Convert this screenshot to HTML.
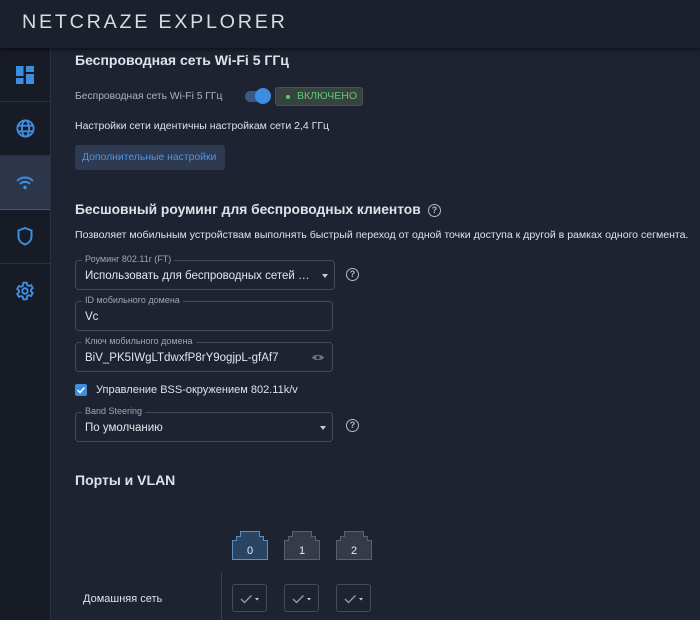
<!DOCTYPE html><html><head><meta charset="utf-8"><style>
*{margin:0;padding:0;box-sizing:border-box}
body{width:700px;height:620px;overflow:hidden;background:#1e2332;font-family:"Liberation Sans","Noto Sans CJK SC",sans-serif;color:#e6e8ec;position:relative}
.hdr{position:absolute;left:0;top:0;width:700px;height:48px;background:#1b202c;box-shadow:0 2px 4px rgba(0,0,0,.5);z-index:2}
.logo{position:absolute;left:22px;top:12px;font-size:19px;letter-spacing:2.6px;color:#d8dbe0;transform:scaleX(1.04);transform-origin:left}
.side{position:absolute;left:0;top:48px;width:51px;height:572px;background:#171b25;border-right:1px solid #2a3040}
.si{height:54px;display:flex;align-items:center;justify-content:center;border-bottom:1px solid #22324a}
.si.act{background:#2c354a;border-bottom:1px solid #2f5e92}
.t{position:absolute;white-space:nowrap}
.h1{font-size:14px;font-weight:bold;color:#dfe2e7}
.fld{position:absolute;border:1px solid #434a5a;border-radius:4px;height:30px}
.lab{position:absolute;top:-7px;left:6px;background:#1e2332;padding:0 3px;font-size:9px;color:#a0a6b2}
.val{position:absolute;left:9px;top:9px;font-size:11.5px;color:#e3e5e9;white-space:nowrap;overflow:hidden;text-overflow:ellipsis;max-width:228px}
.q{position:absolute;width:13px;height:13px;border:1.3px solid #b5bac4;border-radius:50%;font-size:9px;color:#b5bac4;text-align:center;line-height:11px;font-weight:bold}
.arr{position:absolute;right:6px;top:13px;width:0;height:0;border-left:3px solid transparent;border-right:3px solid transparent;border-top:4px solid #c8ccd4}
.port{position:absolute;top:530px;width:36px;height:30px}
.cb{position:absolute;top:584px;width:35px;height:28px;border:1px solid #444b5b;border-radius:3px}
</style></head><body>
<div class="hdr"><div class="logo">NETCRAZE EXPLORER</div></div>
<div class="side">
<div class="si"><svg width="18" height="18" viewBox="0 0 18 18" fill="#3d8de0"><rect x="0" y="0" width="7.5" height="10"/><rect x="10" y="0" width="8" height="6"/><rect x="0" y="12" width="7.5" height="6"/><rect x="10" y="8" width="8" height="10"/></svg></div>
<div class="si"><svg width="19" height="19" viewBox="0 0 20 20" fill="none" stroke="#3d8de0" stroke-width="2"><circle cx="10" cy="10" r="8.5"/><ellipse cx="10" cy="10" rx="3.8" ry="8.5"/><path d="M2 7h16M2 13h16"/></svg></div>
<div class="si act"><svg width="18" height="14" viewBox="0 0 18 14" fill="none" stroke="#3d8de0" stroke-width="2"><path d="M1 5a11 11 0 0 1 16 0M4 8a7 7 0 0 1 10 0"/><circle cx="9" cy="11.5" r="1.7" fill="#3d8de0" stroke="none"/></svg></div>
<div class="si"><svg width="16" height="19" viewBox="0 0 16 19" fill="none" stroke="#3d8de0" stroke-width="2"><path d="M8 1L1.5 3.5v6c0 4 3 6.8 6.5 8 3.5-1.2 6.5-4 6.5-8v-6z"/></svg></div>
<div class="si" style="border:none"><svg width="20" height="20" viewBox="0 0 24 24" fill="none" stroke="#3d8de0" stroke-width="2.3"><circle cx="12" cy="12" r="3.3"/><path d="M10 2h4l.6 2.8 2 1.1 2.7-.9 2 3.5-2.1 1.9v2.2l2.1 1.9-2 3.5-2.7-.9-2 1.1L14 22h-4l-.6-2.8-2-1.1-2.7.9-2-3.5 2.1-1.9v-2.2L2.7 9.5l2-3.5 2.7.9 2-1.1z"/></svg></div>
</div>
<div class="t h1" style="left:75px;top:52px">Беспроводная сеть Wi-Fi 5 ГГц</div>
<div class="t" style="left:75px;top:91px;font-size:10.3px;color:#aeb3bd">Беспроводная сеть Wi-Fi 5 ГГц</div>
<div style="position:absolute;left:245px;top:91px;width:22px;height:11px;border-radius:6px;background:#3a5a86"></div>
<div style="position:absolute;left:255px;top:88px;width:16px;height:16px;border-radius:50%;background:#3d8de0"></div>
<div style="position:absolute;left:275px;top:87px;width:88px;height:19px;background:#38433f;border:1px solid #46544c;border-radius:3px;font-size:10.5px;color:#5cc87a;line-height:17px;padding-left:21px">ВКЛЮЧЕНО<span style="position:absolute;left:10px;top:7px;width:4px;height:4px;border-radius:50%;background:#5cc87a"></span></div>
<div class="t" style="left:75px;top:120px;font-size:10.5px;color:#dfe2e7">Настройки сети идентичны настройкам сети 2,4 ГГц</div>
<div style="position:absolute;left:75px;top:145px;width:150px;height:25px;background:#2d3a52;border-radius:3px;font-size:10.4px;color:#4e95e0;line-height:25px;padding-left:7px;white-space:nowrap">Дополнительные настройки</div>
<div class="t h1" style="left:75px;top:202px;font-size:13.8px">Бесшовный роуминг для беспроводных клиентов</div>
<div class="q" style="left:428px;top:204px">?</div>
<div class="t" style="left:75px;top:229px;font-size:10.55px;color:#dfe2e7">Позволяет мобильным устройствам выполнять быстрый переход от одной точки доступа к другой в рамках одного сегмента.</div>
<div class="fld" style="left:75px;top:260px;width:260px"><span class="lab">Роуминг 802.11r (FT)</span><span class="val">Использовать для беспроводных сетей 2,4 и 5 ГГц</span><span class="arr"></span></div>
<div class="q" style="left:346px;top:268px">?</div>
<div class="fld" style="left:75px;top:301px;width:258px"><span class="lab">ID мобильного домена</span><span class="val">Vc</span></div>
<div class="fld" style="left:75px;top:342px;width:258px"><span class="lab">Ключ мобильного домена</span><span class="val">BiV_PK5IWgLTdwxfP8rY9ogjpL-gfAf7</span><svg style="position:absolute;right:8px;top:10px" width="12" height="9" viewBox="0 0 12 9"><path d="M0 4.5C2 1 10 1 12 4.5 10 8 2 8 0 4.5z" fill="#6b717d"/><circle cx="6" cy="4.5" r="1.8" fill="#1e2332"/></svg></div>
<div style="position:absolute;left:75px;top:384px;width:12px;height:12px;background:#3d8de0;border-radius:2px"><svg width="12" height="12" viewBox="0 0 12 12" style="position:absolute"><path d="M2.5 6l2.5 2.5 4.5-5" stroke="#fff" stroke-width="1.5" fill="none"/></svg></div>
<div class="t" style="left:96px;top:384px;font-size:11px;color:#dfe2e7">Управление BSS-окружением 802.11k/v</div>
<div class="fld" style="left:75px;top:412px;width:258px"><span class="lab">Band Steering</span><span class="val">По умолчанию</span><span class="arr"></span></div>
<div class="q" style="left:346px;top:419px">?</div>
<div class="t h1" style="left:75px;top:472px">Порты и VLAN</div>
<svg class="port" style="left:232px" viewBox="0 0 36 30"><path d="M0.5 29.5V10.5H4.5V6.5H8.5V1.5H27.5V6.5H31.5V10.5H35.5V29.5Z" fill="#2b4462" stroke="#5a8fc4"/><text x="18" y="24" fill="#e6e8ec" font-size="11" text-anchor="middle" font-family="Liberation Sans">0</text></svg>
<svg class="port" style="left:284px" viewBox="0 0 36 30"><path d="M0.5 29.5V10.5H4.5V6.5H8.5V1.5H27.5V6.5H31.5V10.5H35.5V29.5Z" fill="#353b48" stroke="#5a606c"/><text x="18" y="24" fill="#e6e8ec" font-size="11" text-anchor="middle" font-family="Liberation Sans">1</text></svg>
<svg class="port" style="left:336px" viewBox="0 0 36 30"><path d="M0.5 29.5V10.5H4.5V6.5H8.5V1.5H27.5V6.5H31.5V10.5H35.5V29.5Z" fill="#353b48" stroke="#5a606c"/><text x="18" y="24" fill="#e6e8ec" font-size="11" text-anchor="middle" font-family="Liberation Sans">2</text></svg>
<div style="position:absolute;left:221px;top:572px;width:1px;height:48px;background:#3a404d"></div>
<div class="t" style="left:83px;top:593px;font-size:11px;color:#dfe2e7">Домашняя сеть</div>
<div class="cb" style="left:232px"><svg width="35" height="28" viewBox="0 0 35 28"><path d="M8 14l3.5 3.5 7-7" stroke="#9aa0aa" stroke-width="1.3" fill="none"/><path d="M22 13h4l-2 2.5z" fill="#c8ccd4"/></svg></div>
<div class="cb" style="left:284px"><svg width="35" height="28" viewBox="0 0 35 28"><path d="M8 14l3.5 3.5 7-7" stroke="#9aa0aa" stroke-width="1.3" fill="none"/><path d="M22 13h4l-2 2.5z" fill="#c8ccd4"/></svg></div>
<div class="cb" style="left:336px"><svg width="35" height="28" viewBox="0 0 35 28"><path d="M8 14l3.5 3.5 7-7" stroke="#9aa0aa" stroke-width="1.3" fill="none"/><path d="M22 13h4l-2 2.5z" fill="#c8ccd4"/></svg></div>
</body></html>
